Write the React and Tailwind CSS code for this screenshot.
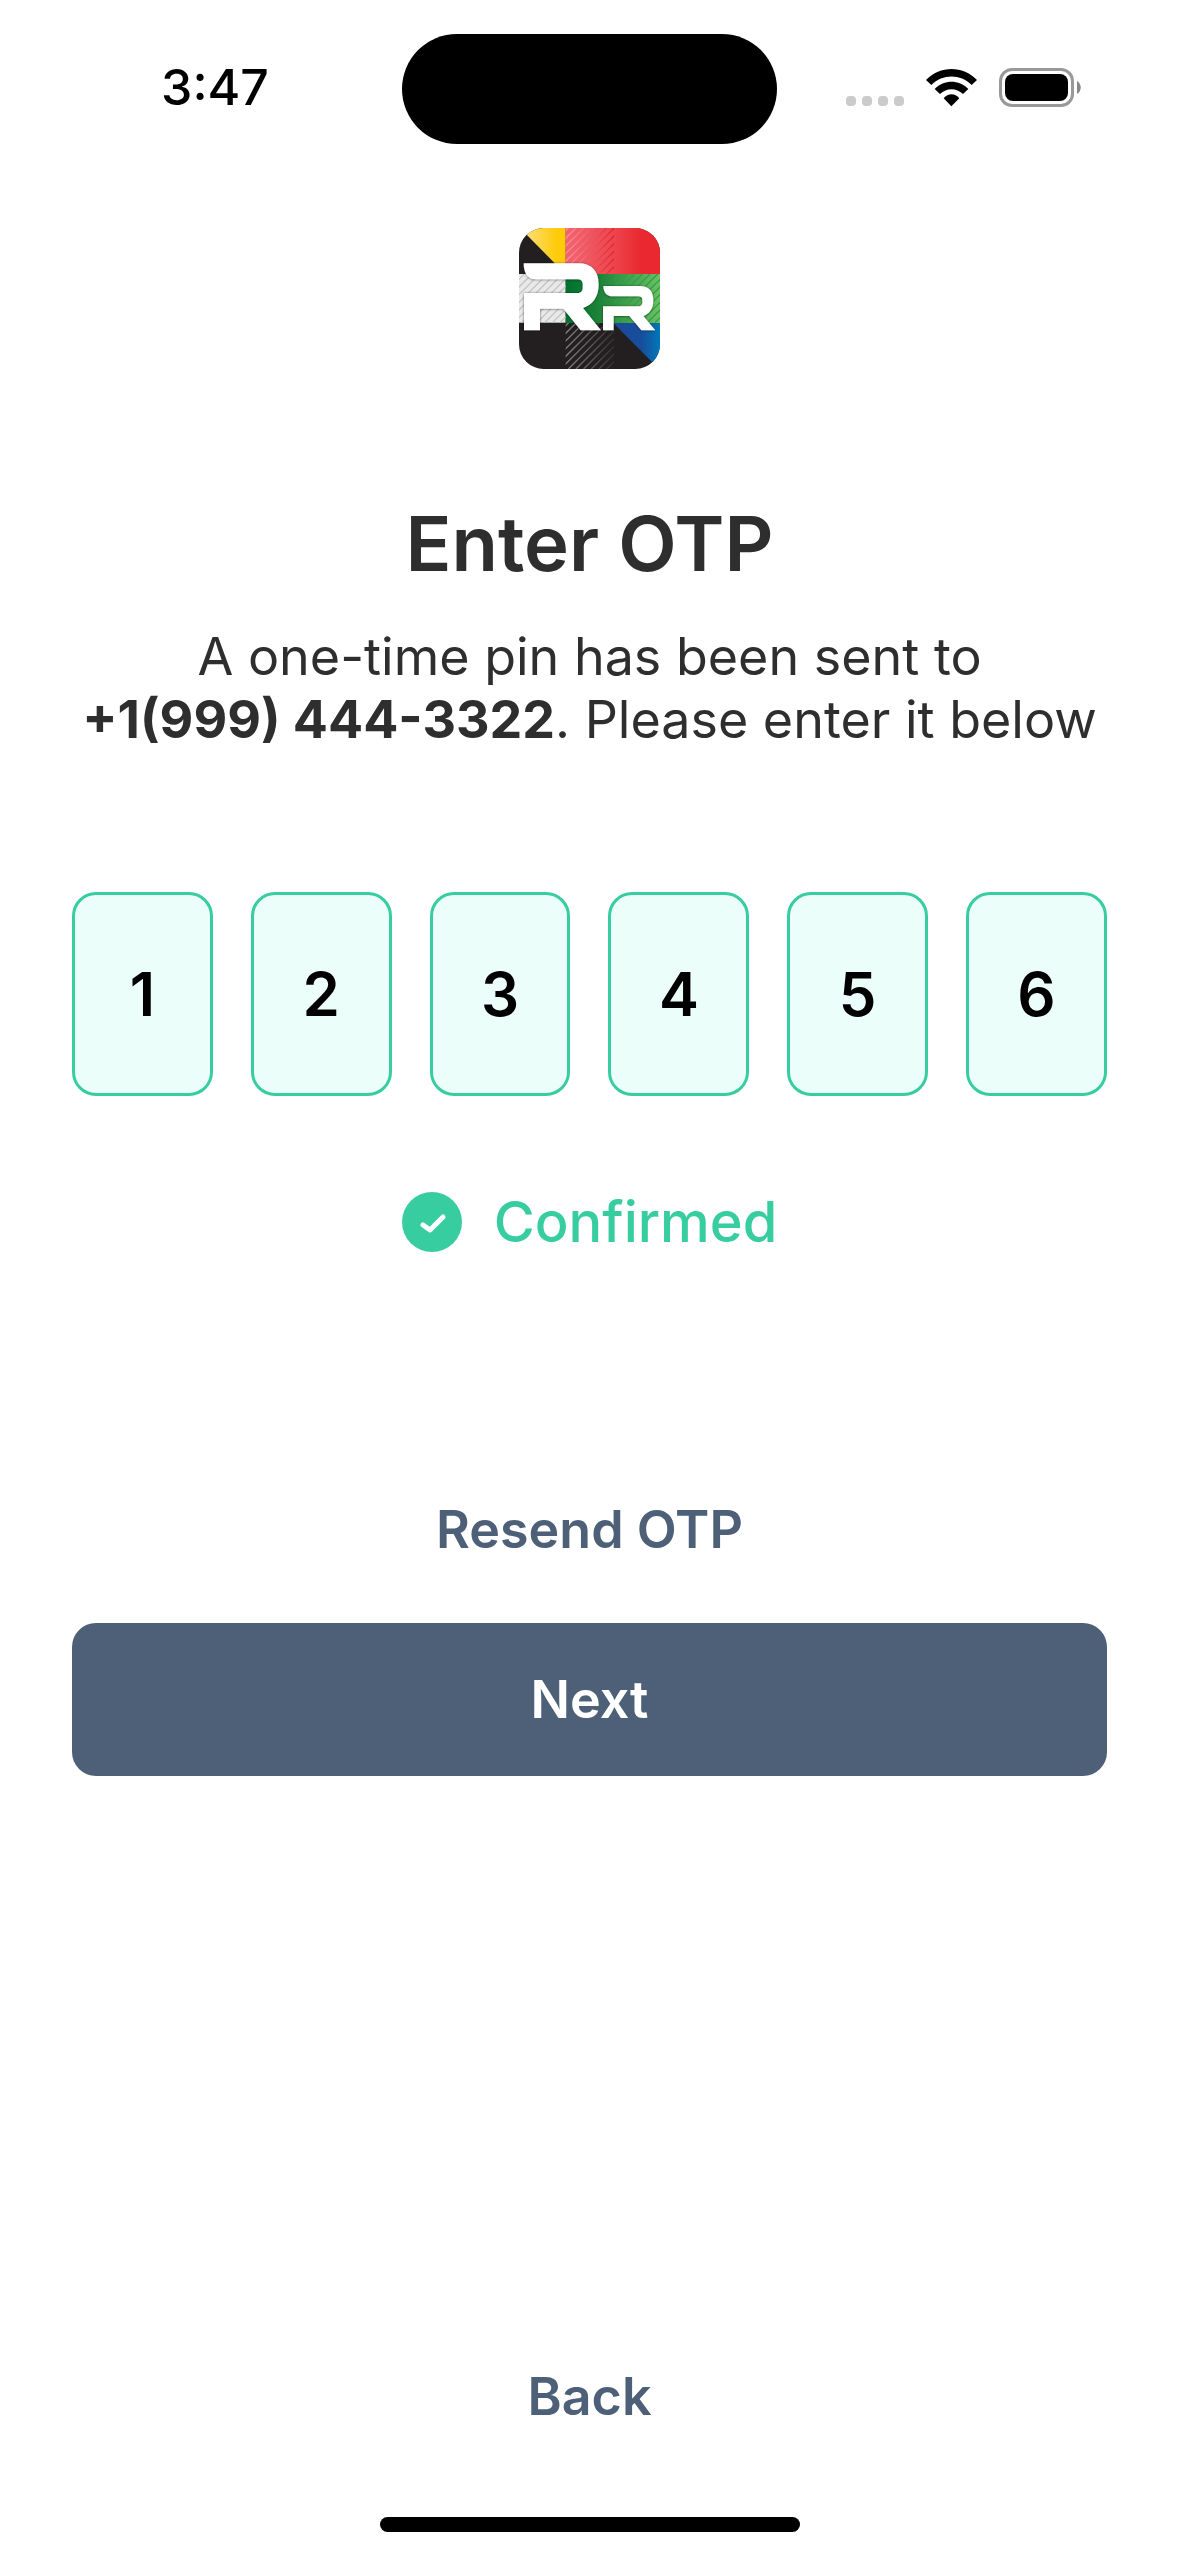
import React, { useState } from "react";

function Logo() {
  const big =
    "M71 160H236C276 160 296 184 296 224C296 260 278 284 249 294L303 361H242L190 296H120V361H72V249H232C242 249 248 243 248 233V222C248 213 243 208 232 208H106C84 208 71 190 71 160Z";
  const small =
    "M310 228H420C447 228 460 244 460 271C460 296 449 311 430 318L466 361H424L388 318H341V361H309V289H414C422 289 427 284 427 278V270C427 263 423 259 414 259H337C320 259 310 247 310 228Z";
  return (
    <svg viewBox="57 54 423 423" className="size-[141px]" role="img" aria-label="RR">
      <defs>
        <clipPath id="tile"><rect x="57" y="54" width="423" height="423" rx="74" /></clipPath>
        <clipPath id="hRed"><rect x="197" y="54" width="145" height="138" /></clipPath>
        <clipPath id="hGreen"><rect x="342" y="192" width="138" height="146" /></clipPath>
        <clipPath id="hWhite"><rect x="57" y="192" width="140" height="146" /></clipPath>
        <clipPath id="hBlack"><rect x="197" y="338" width="145" height="139" /></clipPath>
        <linearGradient id="yellow"><stop offset="0" stopColor="#ffe08a" /><stop offset="0.8" stopColor="#fdcb0a" /></linearGradient>
        <linearGradient id="red"><stop offset="0" stopColor="#f3636f" /><stop offset="0.45" stopColor="#ef4a53" /><stop offset="0.8" stopColor="#ea282f" /></linearGradient>
        <linearGradient id="green"><stop offset="0" stopColor="#00702f" /><stop offset="0.35" stopColor="#1c8338" /><stop offset="1" stopColor="#6cc063" /></linearGradient>
        <linearGradient id="blue"><stop offset="0" stopColor="#1b4a98" /><stop offset="0.6" stopColor="#174e9c" /><stop offset="1" stopColor="#0078b8" /></linearGradient>
        <linearGradient id="fadeRed" gradientUnits="userSpaceOnUse" x1="197" y1="0" x2="342" y2="0"><stop offset="0" stopColor="#fa969e" /><stop offset="1" stopColor="#dc2430" /></linearGradient>
        <linearGradient id="fadeBlack" gradientUnits="userSpaceOnUse" x1="197" y1="0" x2="342" y2="0"><stop offset="0" stopColor="#858384" /><stop offset="1" stopColor="#343132" /></linearGradient>
        <filter id="shade" x="-10%" y="-10%" width="120%" height="120%">
          <feDropShadow dx="0" dy="1" stdDeviation="3" floodColor="#000" floodOpacity="0.6" />
        </filter>
      </defs>
      <g clipPath="url(#tile)">
        <rect x="57" y="54" width="423" height="423" fill="#231f20" />
        <path d="M62 54H197V192H196L77 71Z" fill="url(#yellow)" />
        <rect x="197" y="54" width="283" height="138" fill="url(#red)" />
        <rect x="57" y="192" width="140" height="146" fill="#e9e9ea" />
        <rect x="197" y="192" width="283" height="147" fill="url(#green)" />
        <path d="M342 339H480V480L342 341Z" fill="url(#blue)" />
        <g clipPath="url(#hRed)" stroke="url(#fadeRed)" strokeWidth="4">
          {[-130, -107, -84, -61, -38, -15, 8, 31, 54, 77, 100, 123].map((o) => (
            <path key={o} d={`M${197 + o} 192L${335 + o} 54`} />
          ))}
        </g>
        <g clipPath="url(#hGreen)" stroke="#2fa14a" strokeWidth="4">
          {[-130, -107, -84, -61, -38, -15, 8, 31, 54, 77, 100, 123].map((o) => (
            <path key={o} d={`M${342 + o} 338L${488 + o} 192`} />
          ))}
        </g>
        <g clipPath="url(#hWhite)" stroke="#c3c4c6" strokeWidth="4">
          {[-130, -107, -84, -61, -38, -15, 8, 31, 54, 77, 100, 123].map((o) => (
            <path key={o} d={`M${57 + o} 338L${203 + o} 192`} />
          ))}
        </g>
        <g clipPath="url(#hBlack)" stroke="url(#fadeBlack)" strokeWidth="4">
          {[-130, -107, -84, -61, -38, -15, 8, 31, 54, 77, 100, 123].map((o) => (
            <path key={o} d={`M${197 + o} 477L${336 + o} 338`} />
          ))}
        </g>
        <path d={big} fill="#fff" filter="url(#shade)" />
        <path d={small} fill="#fff" filter="url(#shade)" />
      </g>
    </svg>
  );
}

function StatusBar() {
  return (
    <header className="grid grid-cols-[1fr_375px_1fr] items-center pt-[34px]">
      <time className="pb-1 pl-7 text-center text-[50px] leading-[60px] font-medium text-black">3:47</time>
      <div className="h-[110px] rounded-full bg-black" />
      <div className="flex items-end justify-center pr-[30px] pb-1">
        <div className="mr-[22px] flex gap-[6px] pb-px">
          <span className="size-[10px] rounded-[4px] bg-[#cbcbcb]" />
          <span className="size-[10px] rounded-[4px] bg-[#cbcbcb]" />
          <span className="size-[10px] rounded-[4px] bg-[#cbcbcb]" />
          <span className="size-[10px] rounded-[4px] bg-[#cbcbcb]" />
        </div>
        <svg viewBox="378 114 153 117" className="mr-[22px] h-[39px] w-[51px]" aria-hidden="true">
          <path d="M378 150C420 106 489 106 531 150L515 165C481 131 428 131 394 165Z" />
          <path d="M404 177C433 148 476 148 505 177L489 192C469 173 440 173 420 192Z" />
          <path d="M431 205C444 189 465 189 478 205L454 229Z" />
        </svg>
        <svg viewBox="0 0 82 39" className="h-[39px] w-[82px]" aria-hidden="true">
          <rect x="1.5" y="1.5" width="72" height="36" rx="11.5" fill="none" stroke="#999" strokeWidth="3" />
          <rect x="6" y="6" width="63" height="27" rx="8" />
          <path d="M78 13C83 16 83 23 78 26Z" fill="#888" />
        </svg>
      </div>
    </header>
  );
}

export default function App() {
  const [digits, setDigits] = useState(["1", "2", "3", "4", "5", "6"]);
  const update = (i, value) =>
    setDigits(digits.map((d, n) => (n === i ? value.replace(/\D/g, "") : d)));

  return (
    <div className="flex min-h-screen flex-col bg-white font-['Inter',sans-serif] text-[#2e2e2e]">
      <StatusBar />
      <main className="flex grow flex-col items-center px-[72px]">
        <div className="mt-[84px]">
          <Logo />
        </div>
        <h1 className="mt-[132px] text-[76px] leading-[84px] font-semibold">Enter OTP</h1>
        <p className="mt-10 text-center text-[52px] leading-[63px] whitespace-nowrap">
          A one-time pin has been sent to
          <br />
          <strong className="font-bold">+1(999) 444-3322</strong>. Please enter it below
        </p>
        <div className="mt-[141px] flex w-full gap-[38px]">
          {digits.map((d, i) => (
            <input
              key={i}
              aria-label={`Digit ${i + 1}`}
              inputMode="numeric"
              maxLength={1}
              value={d}
              onChange={(e) => update(i, e.target.value)}
              className="h-[204px] min-w-0 flex-1 rounded-3xl border-3 border-[#38cda0] bg-[#ecfef9] text-center text-[60px] font-semibold text-black"
            />
          ))}
        </div>
        <div role="status" className="mt-24 flex items-center gap-8 text-[#38cda0]">
          <svg viewBox="0 0 60 60" className="size-[60px]" aria-hidden="true">
            <circle cx="30" cy="30" r="30" fill="currentColor" />
            <path d="M21 33L28 38L41 25" fill="none" stroke="#fff" strokeWidth="5" strokeLinecap="round" strokeLinejoin="round" />
          </svg>
          <span className="text-[56px] leading-[60px] font-medium">Confirmed</span>
        </div>
        <button type="button" className="mt-[246px] text-[52px] leading-[64px] font-semibold text-[#4d6078]">
          Resend OTP
        </button>
        <button type="button" className="mt-[61px] h-[153px] w-full rounded-3xl bg-[#4d6078] text-[52px] leading-[64px] font-semibold text-white">
          Next
        </button>
        <button type="button" className="mt-auto text-[52px] leading-[64px] font-semibold text-[#4d6078]">
          Back
        </button>
      </main>
      <div className="mx-auto mt-[88px] mb-6 h-[15px] w-[420px] rounded-full bg-black" />
    </div>
  );
}
